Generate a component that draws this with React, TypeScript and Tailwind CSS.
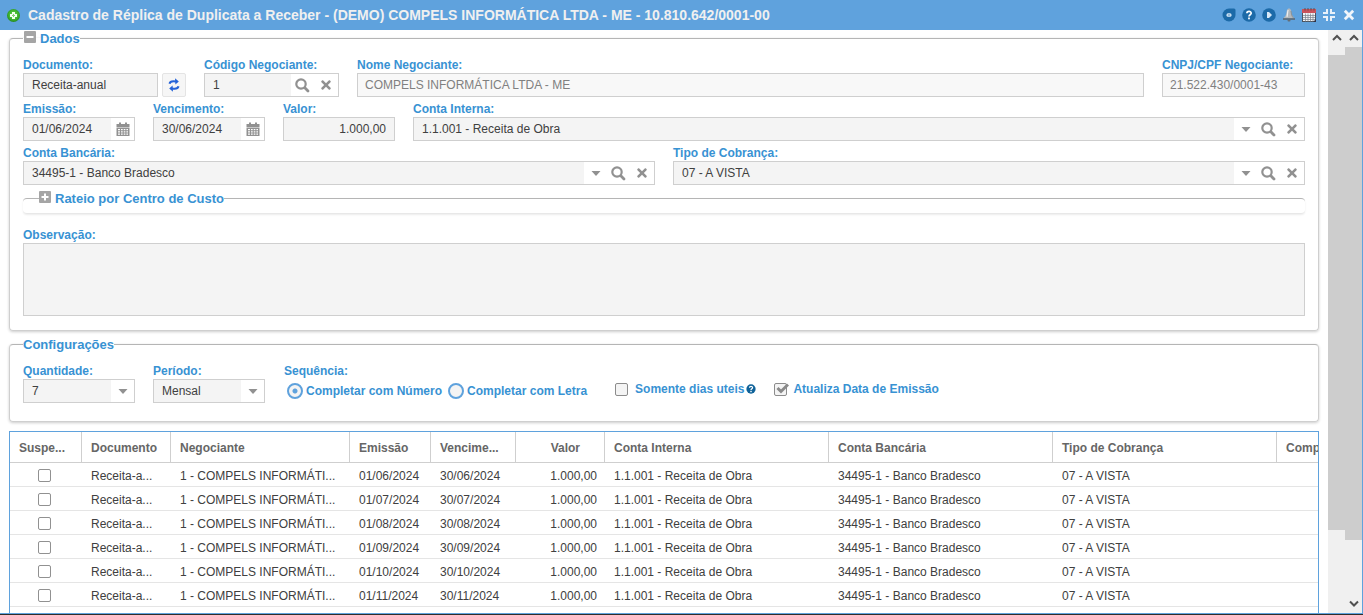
import React, { useState } from 'react';
import { FaTimes } from 'react-icons/fa';

const BORDER = 'border border-[#cfcfcf]';

const PlusBadge = () => (
  <svg width="13" height="13" viewBox="0 0 13 13" className="shrink-0">
    <defs>
      <radialGradient id="badge" cx="0.5" cy="0.45" r="0.6">
        <stop offset="0" stopColor="#6cd34f" />
        <stop offset="0.6" stopColor="#3fb32f" />
        <stop offset="1" stopColor="#1d7d1b" />
      </radialGradient>
    </defs>
    <circle cx="6.500" cy="6.500" r="6.500" fill="url(#badge)" />
    <path d="M5 3h3v2h2v3H8v2H5V8H3V5h2z" fill="#f2fff0" />
    <path d="M6.500 5v3M5 6.500h3" stroke="#7fce70" strokeWidth="1" />
  </svg>
);

const RefreshIcon = () => (
  <svg width="12" height="14" viewBox="0 0 12 14" fill="none" stroke="#2563d8" strokeWidth="2">
    <path d="M1.500 5.800C2 3.600 4.500 2.900 8 3.600" />
    <path d="M7 0.300L10.800 3.600L7.400 6.400Z" fill="#2563d8" stroke="none" />
    <path d="M10.500 8.200C10 10.400 7.500 11.100 4 10.400" />
    <path d="M5 13.700L1.200 10.400L4.600 7.600Z" fill="#2563d8" stroke="none" />
  </svg>
);

const Round = ({ children }: { children: React.ReactNode }) => (
  <svg width="14" height="14" viewBox="0 0 14 14">
    <circle cx="7" cy="7" r="6.8" fill="#1c6aa8" />
    {children}
  </svg>
);

const HelpIcon = () => (
  <Round>
    <path d="M4.900 5.300C4.900 2.800 9.200 2.800 9.200 5.200C9.200 6.700 7 6.700 7 8.400" fill="none" stroke="#fff" strokeWidth="1.700" />
    <rect x="6.100" y="9.500" width="1.800" height="1.800" fill="#fff" />
  </Round>
);

const tools = [
  {
    name: 'Recolher',
    icon: (
      <svg width="14" height="14" viewBox="0 0 14 14">
        <path d="M7 0.500H12Q13.500 0.500 13.500 2V7A6.500 6.500 0 1 1 7 0.500Z" fill="#1c6aa8" />
        <rect x="4.500" y="5.200" width="5" height="3.600" rx="1.500" fill="#d7e8f7" />
        <path d="M5.800 7h2.400" stroke="#4f8fc2" />
      </svg>
    ),
  },
  { name: 'Ajuda', icon: <HelpIcon /> },
  {
    name: 'Executar',
    icon: (
      <Round>
        <path d="M5 4H7L10 7L7 10H5Z" fill="#d7e8f7" />
      </Round>
    ),
  },
  {
    name: 'Notificações',
    icon: (
      <svg width="14" height="14" viewBox="0 0 14 14">
        <path d="M7 0.500C5 0.500 4.700 3 4.300 5.500C4 8 2.500 8.500 1.500 10.500H12.500C11.500 8.500 10 8 9.700 5.500C9.300 3 9 0.500 7 0.500Z" fill="#b4b9bd" />
        <path d="M6.200 2C5.500 3 5.600 6 5 8.800" stroke="#eceff0" strokeWidth="1.200" fill="none" />
        <path d="M9 3C9.500 6 9.500 8 11.500 10" stroke="#7d858c" strokeWidth="0.800" fill="none" />
        <path d="M1 11h12" stroke="#565d66" strokeWidth="1.400" />
        <rect x="5.500" y="11.500" width="3" height="2" rx="1" fill="#666e76" />
      </svg>
    ),
  },
  {
    name: 'Calendário',
    icon: (
      <svg width="14" height="14" viewBox="0 0 14 14">
        <rect x="0.500" y="1.500" width="13" height="12" fill="#f3f4f6" stroke="#4c5560" />
        <rect x="0" y="1" width="14" height="4" fill="#c9535b" />
        <path d="M3 0v2.500M6 0v2.500M9 0v2.500M12 0v2.500" stroke="#5b4a4a" strokeWidth="0.900" />
        <path d="M1 7.500h12M1 9.500h12M1 11.500h12M3.500 5.500v8M6 5.500v8M8.500 5.500v8M11 5.500v8" stroke="#7a838c" strokeWidth="0.700" />
        <path d="M14 11v3h-3z" fill="#334" />
      </svg>
    ),
  },
  {
    name: 'Restaurar',
    icon: (
      <svg width="14" height="14" viewBox="0 0 14 14" fill="none" stroke="#e8f1fa" strokeWidth="2">
        <path d="M5 1v4H1M9 1v4h4M5 13V9H1M9 13V9h4" />
      </svg>
    ),
  },
  {
    name: 'Fechar',
    icon: (
      <svg width="14" height="14" viewBox="0 0 14 14" stroke="#f0f5fb" strokeWidth="2.800">
        <path d="M2.800 2.800L11.200 11.200M11.200 2.800L2.800 11.200" />
      </svg>
    ),
  },
];

const ToggleIcon = ({ plus }: { plus?: boolean }) => (
  <svg width="12" height="12" viewBox="0 0 12 12">
    <rect width="12" height="12" rx="1" fill="#a5a5a5" />
    <path d={plus ? 'M2.500 6h7M6 2.500v7' : 'M2.500 6h7'} stroke="#fff" strokeWidth="2" />
  </svg>
);

interface FieldProps {
  id: string;
  label: string;
  className?: string;
  children: React.ReactNode;
}

const Field = ({ id, label, className = '', children }: FieldProps) => (
  <div className={`flex flex-col ${className}`}>
    <label htmlFor={id} className="h-4 leading-4 font-bold text-[#3892d3] whitespace-nowrap">
      {label}
    </label>
    <div className="flex">{children}</div>
  </div>
);

const inputClass = 'min-w-0 flex-1 h-full px-2 bg-[#f4f4f4] text-[#404040] outline-none';

const Box = ({ children }: { children: React.ReactNode }) => (
  <div className={`flex flex-1 min-w-0 h-6 bg-white ${BORDER}`}>{children}</div>
);

const Trigger = ({ name, children }: { name: string; children: React.ReactNode }) => (
  <button type="button" aria-label={name} className="w-[23px] h-full flex items-center justify-center text-[#919191]">
    {children}
  </button>
);

const SearchAndClear = () => (
  <div className="flex pr-px">
    <Trigger name="Pesquisar">
      <svg width="15" height="15" viewBox="0 0 15 15" fill="none" stroke="currentColor">
        <circle cx="6" cy="6" r="4.700" strokeWidth="2.200" />
        <path d="M9.800 9.800L13 13" strokeWidth="2.800" strokeLinecap="round" />
      </svg>
    </Trigger>
    <Trigger name="Limpar">
      <FaTimes size={14} />
    </Trigger>
  </div>
);

const DateField = ({ id, label, value }: { id: string; label: string; value: string }) => (
  <Field id={id} label={label} className="w-28">
    <Box>
      <input id={id} defaultValue={value} className={inputClass} />
      <Trigger name="Abrir calendário">
        <svg width="14" height="14" viewBox="0 0 14 14">
          <path d="M0.500 2h2.500V0.500h2V2h4V0.500h2V2h2.500v3H0.500V2z" fill="currentColor" />
          <path d="M0.500 5.500h13V14h-13z" fill="currentColor" />
          <path d="M2 7h2v1.200h-2zM5 7h1.700v1.200H5zM7.700 7h1.700v1.200H7.700zM10.400 7h1.600v1.200h-1.600zM2 9.300h2v1.200h-2zM5 9.300h1.700v1.200H5zM7.700 9.300h1.700v1.200H7.700zM10.400 9.300h1.600v1.200h-1.600zM2 11.600h2v1.200h-2zM5 11.600h1.700v1.200H5zM7.700 11.600h1.700v1.200H7.700zM10.400 11.600h1.600v1.200h-1.600z" fill="#fff" />
        </svg>
      </Trigger>
    </Box>
  </Field>
);

interface ComboProps {
  id: string;
  label: string;
  value: string;
  className?: string;
  search?: boolean;
}

const Combo = ({ id, label, value, className, search }: ComboProps) => (
  <Field id={id} label={label} className={className}>
    <Box>
      <div className="relative flex flex-1 min-w-0">
        <select id={id} className={`${inputClass} appearance-none`}>
          <option>{value}</option>
        </select>
        <span className="absolute inset-y-0 right-0 w-[23px] bg-white flex items-center justify-center text-[#919191] pointer-events-none">
          <svg width="10" height="5" viewBox="0 0 10 5">
            <path d="M0.500 0h9L5 5z" fill="currentColor" />
          </svg>
        </span>
      </div>
      {search && <SearchAndClear />}
    </Box>
  </Field>
);

const panelClass =
  'min-w-0 border border-[#cfcfcf] border-t-[#b5b5b5] rounded-sm px-[13px] shadow-[0_1px_3px_rgba(0,0,0,0.2)]';
const legendClass = 'h-[17px] leading-[17px] flex items-center gap-1 text-[13px] font-bold text-[#3892d3]';

// the last column takes whatever width is left
const columns = [
  { title: 'Suspe...', width: 72 },
  { title: 'Documento', width: 89 },
  { title: 'Negociante', width: 179 },
  { title: 'Emissão', width: 81 },
  { title: 'Vencime...', width: 85 },
  { title: 'Valor', width: 89 },
  { title: 'Conta Interna', width: 224 },
  { title: 'Conta Bancária', width: 224 },
  { title: 'Tipo de Cobrança', width: 224 },
  { title: 'Comp', width: undefined },
];

const months = ['06', '07', '08', '09', '10', '11'];
const cellClass = 'pt-0.5 pl-[9px] whitespace-nowrap';

const Grid = () => (
  <div className="mt-[9px] flex-1 min-h-0 overflow-hidden border border-b-0 border-[#5fa2dd]">
    <table className="table-fixed border-separate border-spacing-0 w-full min-w-[1308px]">
      <colgroup>
        {columns.map((c) => (
          <col key={c.title} style={{ width: c.width }} />
        ))}
      </colgroup>
      <thead>
        <tr className="h-[31px] text-[#666666]">
          {columns.map((c) => (
            <th
              key={c.title}
              className={`${cellClass} border-b border-r last:border-r-0 border-[#cfcfcf] font-bold ${c.title === 'Valor' ? 'text-right pr-6' : 'text-left'}`}
            >
              {c.title}
            </th>
          ))}
        </tr>
      </thead>
      <tbody>
        {months.map((m) => (
          <tr key={m} className="h-6 text-[#404040] *:border-b *:border-[#e5e5e5]">
            <td className="pt-0.5">
              <div className="flex justify-center pr-1">
                <input
                  type="checkbox"
                  aria-label={`Suspender 01/${m}/2024`}
                  className="appearance-none size-[13px] rounded-xs border border-[#919191] bg-white checked:bg-[#5fa2dd]"
                />
              </div>
            </td>
            <td className={cellClass}>Receita-a...</td>
            <td className={cellClass}>1 - COMPELS INFORMÁTI...</td>
            <td className={cellClass}>01/{m}/2024</td>
            <td className={cellClass}>30/{m}/2024</td>
            <td className="pt-0.5 pr-2 text-right">1.000,00</td>
            <td className={cellClass}>1.1.001 - Receita de Obra</td>
            <td className={cellClass}>34495-1 - Banco Bradesco</td>
            <td className={cellClass}>07 - A VISTA</td>
            <td />
          </tr>
        ))}
      </tbody>
    </table>
  </div>
);

const Chevron = ({ down }: { down?: boolean }) => (
  <svg width="10" height="8" viewBox="0 0 10 8" fill="none" stroke="#505050" strokeWidth="2">
    <path d={down ? 'M1 1.500L5 5.500L9 1.500' : 'M1 6L5 2L9 6'} />
  </svg>
);

export default function App() {
  const [sequence, setSequence] = useState('numero');
  const [onlyBusinessDays, setOnlyBusinessDays] = useState(false);
  const [updateIssueDate, setUpdateIssueDate] = useState(true);

  return (
    <div className="h-screen flex flex-col overflow-hidden bg-white border-b border-[#2d2d2d] font-['Liberation_Sans',Arial,sans-serif] text-[12px]">
      <header className="h-[30px] shrink-0 flex items-center gap-2 px-[7px] bg-[#5fa2dd]">
        <PlusBadge />
        <h1 className="flex-1 truncate text-[14px] font-bold text-[#f0f0f0]">
          Cadastro de Réplica de Duplicata a Receber - (DEMO) COMPELS INFORMÁTICA LTDA - ME - 10.810.642/0001-00
        </h1>
        <div className="flex items-center gap-[6px]">
          {tools.map((t) => (
            <button key={t.name} type="button" aria-label={t.name} className="size-[14px]">
              {t.icon}
            </button>
          ))}
        </div>
      </header>

      <div className="flex flex-1 min-h-0 border-r border-b border-[#5fa2dd]">
        <main className="flex-1 min-w-0 flex flex-col px-[9px] overflow-hidden">
          <fieldset className={`${panelClass} pb-[14px]`}>
            <legend className={legendClass}>
              <button type="button" aria-label="Recolher Dados" className="self-start pt-px pl-px">
                <ToggleIcon />
              </button>
              Dados
            </legend>

            <div className="flex flex-col gap-1 pt-[10px]">
              <div className="flex gap-[18px]">
                <div className="flex items-end gap-1">
                  <Field id="documento" label="Documento:" className="w-[135px]">
                    <Box>
                      <input id="documento" defaultValue="Receita-anual" className={inputClass} />
                    </Box>
                  </Field>
                  <button
                    type="button"
                    aria-label="Atualizar documento"
                    className="size-6 flex items-center justify-center rounded-xs border border-[#e4e4e4] bg-[#f6f6f6]"
                  >
                    <RefreshIcon />
                  </button>
                </div>
                <Field id="codigo" label="Código Negociante:" className="w-[135px]">
                  <Box>
                    <input id="codigo" defaultValue="1" className={inputClass} />
                    <SearchAndClear />
                  </Box>
                </Field>
                <Field id="nome" label="Nome Negociante:" className="flex-1">
                  <Box>
                    <input
                      id="nome"
                      disabled
                      defaultValue="COMPELS INFORMÁTICA LTDA - ME"
                      className="min-w-0 flex-1 px-[7px] bg-[#f8f8f8] text-[#808080]"
                    />
                  </Box>
                </Field>
                <Field id="cnpj" label="CNPJ/CPF Negociante:" className="w-[143px]">
                  <Box>
                    <input
                      id="cnpj"
                      disabled
                      defaultValue="21.522.430/0001-43"
                      className="min-w-0 flex-1 px-[7px] bg-[#f8f8f8] text-[#808080]"
                    />
                  </Box>
                </Field>
              </div>

              <div className="flex gap-[18px]">
                <DateField id="emissao" label="Emissão:" value="01/06/2024" />
                <DateField id="vencimento" label="Vencimento:" value="30/06/2024" />
                <Field id="valor" label="Valor:" className="w-28">
                  <Box>
                    <input id="valor" defaultValue="1.000,00" className={`${inputClass} text-right`} />
                  </Box>
                </Field>
                <Combo id="conta-interna" label="Conta Interna:" value="1.1.001 - Receita de Obra" className="flex-1" search />
              </div>

              <div className="flex gap-[18px]">
                <Combo id="conta-bancaria" label="Conta Bancária:" value="34495-1 - Banco Bradesco" className="flex-1" search />
                <Combo id="cobranca" label="Tipo de Cobrança:" value="07 - A VISTA" className="flex-1" search />
              </div>
            </div>

            <fieldset className="mt-[5px] min-w-0 px-4 border-t border-b border-t-[#b5b5b5] border-b-[#e8e8e8] rounded-sm shadow-[0_1px_2px_rgba(0,0,0,0.08)]">
              <legend className={legendClass}>
                <button type="button" aria-label="Expandir Rateio por Centro de Custo" className="self-start pt-px">
                  <ToggleIcon plus />
                </button>
                Rateio por Centro de Custo
              </legend>
              <div className="h-[6px]" />
            </fieldset>

            <div className="flex flex-col pt-[13px]">
              <label htmlFor="observacao" className="h-4 leading-4 font-bold text-[#3892d3]">
                Observação:
              </label>
              <textarea id="observacao" className={`h-[73px] resize-none bg-[#f4f4f4] p-2 text-[#404040] outline-none ${BORDER}`} />
            </div>
          </fieldset>

          <fieldset className={`${panelClass} mt-[5px] pb-[18px]`}>
            <legend className={legendClass}>Configurações</legend>
            <div className="flex items-start pt-[10px]">
              <div className="flex gap-[18px]">
                <Combo id="quantidade" label="Quantidade:" value="7" className="w-28" />
                <Combo id="periodo" label="Período:" value="Mensal" className="w-28" />
              </div>

              <div role="radiogroup" aria-labelledby="sequencia" className="ml-[19px] font-bold text-[#3892d3]">
                <div id="sequencia" className="h-4 leading-4">
                  Sequência:
                </div>
                <div className="h-6 flex items-center gap-[6px] pl-[3px]">
                  {[
                    { value: 'numero', label: 'Completar com Número' },
                    { value: 'letra', label: 'Completar com Letra' },
                  ].map((o) => (
                    <label key={o.value} className="flex items-center gap-[3px] whitespace-nowrap">
                      <input
                        type="radio"
                        name="sequencia"
                        checked={sequence === o.value}
                        onChange={() => setSequence(o.value)}
                        className="appearance-none size-4 rounded-full border-2 border-[#5fa2dd] bg-[#f4f4f4] checked:bg-[radial-gradient(circle,#5fa2dd_2px,#f4f4f4_3px)]"
                      />
                      {o.label}
                    </label>
                  ))}
                </div>
              </div>

              <div className="flex items-center gap-[18px] h-6 mt-[14px] ml-7 font-bold text-[#3892d3] whitespace-nowrap">
                <div className="flex items-center gap-[2px]">
                  <label className="flex items-center gap-[7px]">
                    <input
                      type="checkbox"
                      checked={onlyBusinessDays}
                      onChange={(e) => setOnlyBusinessDays(e.target.checked)}
                      className="appearance-none size-[13px] rounded-xs border border-[#8c8c8c] bg-[#f4f4f4] checked:bg-[#919191]"
                    />
                    Somente dias uteis
                  </label>
                  <svg width="10" height="10" viewBox="0 0 14 14">
                    <circle cx="7" cy="7" r="6.500" fill="#0f6299" />
                    <path d="M4.900 5.300C4.900 2.800 9.200 2.800 9.200 5.200C9.200 6.700 7 6.700 7 8.400" fill="none" stroke="#fff" strokeWidth="1.800" />
                    <rect x="6" y="9.500" width="2" height="2" fill="#fff" />
                  </svg>
                </div>
                <label className="relative flex items-center gap-[6px]">
                  <input
                    type="checkbox"
                    checked={updateIssueDate}
                    onChange={(e) => setUpdateIssueDate(e.target.checked)}
                    className="appearance-none size-[13px] rounded-xs border border-[#8c8c8c] bg-[#f4f4f4]"
                  />
                  {updateIssueDate && (
                    <svg
                      width="13"
                      height="13"
                      viewBox="0 0 13 13"
                      className="absolute left-[2px] inset-y-0 my-auto pointer-events-none"
                      fill="none"
                      stroke="#8a8a8a"
                      strokeWidth="3"
                    >
                      <path d="M1.500 5L5 8.500L12 1.500" />
                    </svg>
                  )}
                  Atualiza Data de Emissão
                </label>
              </div>
            </div>
          </fieldset>

          <Grid />
        </main>

        <div aria-hidden="true" className="w-[17px] flex flex-col bg-[#f0f0f0]">
          <div className="h-[25px] flex justify-center pt-1">
            <Chevron />
          </div>
          <div className="flex-[475] bg-[#cdcdcd]" />
          <div className="flex-[83]" />
        </div>
        <div aria-hidden="true" className="w-[17px] flex flex-col bg-[#f0f0f0]">
          <div className="h-[17px] flex justify-center pt-1">
            <Chevron />
          </div>
          <div className="flex-[493] bg-[#cdcdcd]" />
          <div className="flex-[56]" />
          <div className="h-[17px] flex justify-center pt-1">
            <Chevron down />
          </div>
        </div>
      </div>
    </div>
  );
}
